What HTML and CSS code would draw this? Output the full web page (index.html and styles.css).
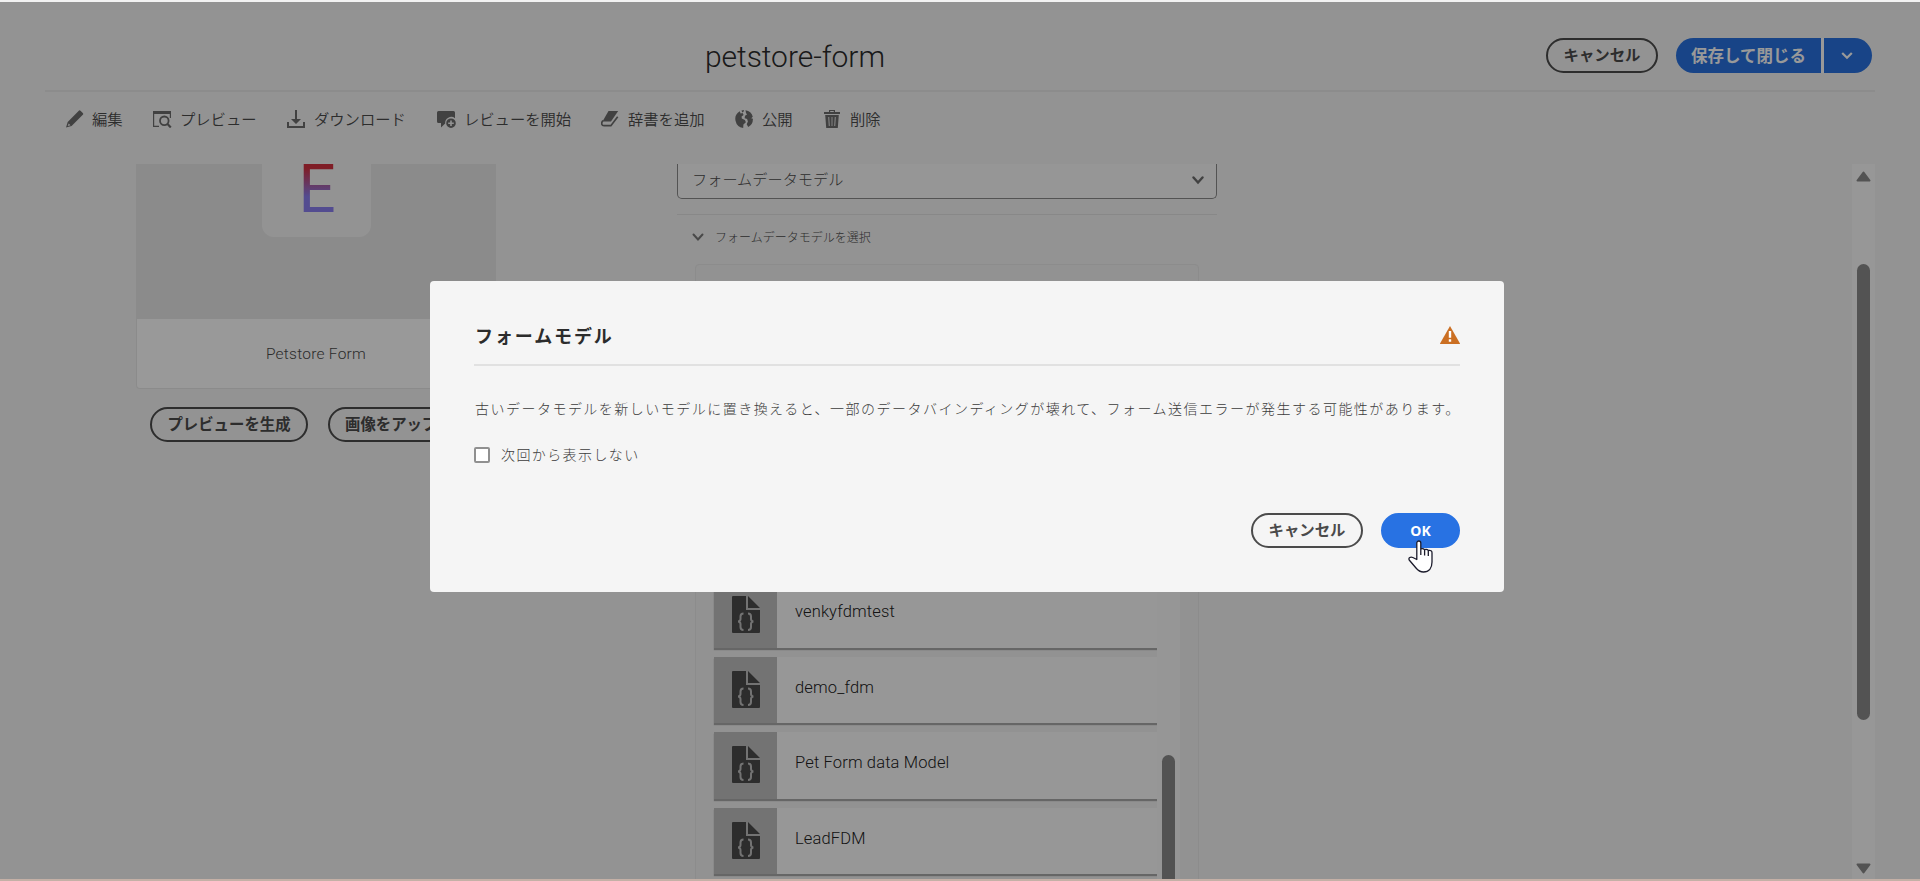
FILE: index.html
```html
<!DOCTYPE html>
<html lang="ja">
<head>
<meta charset="utf-8">
<title>petstore-form</title>
<link rel="stylesheet" href="styles.css">
</head>
<body>
<div class="page">
  <header class="header">
    <h1 class="title">petstore-form</h1>
    <div class="header-actions">
      <button class="btn">キャンセル</button>
      <div class="split">
        <button class="split-main">保存して閉じる</button>
        <button class="split-menu"><svg width="12" height="8" viewBox="0 0 12 8"><path d="M1.200 1 6 5.800 10.800 1" fill="none" stroke="#fff" stroke-width="2.200"/></svg></button>
      </div>
    </div>
  </header>
  <nav class="toolbar">
    <a class="tool t1"><svg width="18" height="18" viewBox="0 0 18 18"><path d="M12.800.8a1.200 1.200 0 0 1 1.700 0l2.300 2.300a1.200 1.200 0 0 1 0 1.700L5.600 15.900 0 17.400 1.700 12zM2.700 13.400l-1 2.700 2.800-.9z" fill-rule="evenodd"/></svg>編集</a>
    <a class="tool t2"><svg width="19" height="18" viewBox="0 0 19 18"><path d="M0 1h18v7h-1.200V4H1.200v11.800H6V17H0z"/><circle cx="11.300" cy="10.800" r="4.300" fill="none" stroke="#6d6d6d" stroke-width="1.800"/><path d="m14.300 13.800 3.500 3.600" stroke="#6d6d6d" stroke-width="2.200"/></svg>プレビュー</a>
    <a class="tool t3"><svg width="18" height="18" viewBox="0 0 18 18"><path d="M8 0h2v9h4l-5 5-5-5h4zM0 12h2v4h14v-4h2v6H0z"/></svg>ダウンロード</a>
    <a class="tool t4"><svg width="19" height="18" viewBox="0 0 19 18"><path d="M1.500 1h15A1.500 1.500 0 0 1 18 2.500v5.800a6 6 0 0 0-9.800 5.300L4 17.500V13H1.500A1.500 1.500 0 0 1 0 11.500v-9A1.500 1.500 0 0 1 1.500 1z"/><path d="M14 8.400a4.800 4.800 0 1 0 0 9.600 4.800 4.800 0 0 0 0-9.600zm.8 2v2h2V14h-2v2h-1.600v-2h-2v-1.600h2v-2z" fill-rule="evenodd"/></svg>レビューを開始</a>
    <a class="tool t5"><svg width="18" height="18" viewBox="0 0 18 18"><path d="M7.500 1h9.700L10 11.500H1.500z"/><path d="M1.900 10.500C0 13 .4 15.700 3 15.700h6.900l6.800-9" fill="none" stroke="#6d6d6d" stroke-width="1.700"/></svg>辞書を追加</a>
    <a class="tool t6"><svg width="18" height="18" viewBox="0 0 18 18"><path d="M4.800 1.200 5.600 3.500 7.600 3l1 2-2 1.500.2 2 3.100 1.500 1 2.200-2.500 2.400-.2 3.300A9 9 0 0 1 4.800 1.200zM6.500.5 9 0l-.5 1.800-1.200.6zM10.500.2a9 9 0 0 1 7.300 6.600l-1.600 1.400 1.700.6a9 9 0 0 1-4.700 8.200l-1.500-2.700 1.200-2.800-.8-2.500-2.500-.7.400-2.600 2-1.200-1-1.500z"/></svg>公開</a>
    <a class="tool t7"><svg width="16" height="18" viewBox="0 0 16 18"><path d="M5 0h6v2h5v2H0V2h5zm1.200 1v1h3.600V1zM1.200 5h13.600l-1 13H2.200zM4.300 7l.5 9h.9L5.200 7zm3.300 0v9h.8V7zm3.200 0-.5 9h.9l.5-9z" fill-rule="evenodd"/></svg>削除</a>
  </nav>
  <main class="content">
    <section class="left">
      <div class="card">
        <div class="thumb"><div class="tile"><span class="letter">E</span></div></div>
        <div class="card-name">Petstore Form</div>
      </div>
      <div class="card-actions"><button class="btn">プレビューを生成</button><button class="btn">画像をアップロード</button></div>
    </section>
    <section class="model">
      <div class="select"><span>フォームデータモデル</span><svg width="12" height="9" viewBox="0 0 12 9"><path d="m1.500 1.500 4.500 5 4.500-5" fill="none" stroke="#6d6d6d" stroke-width="2.400" stroke-linecap="round"/></svg></div>
      <div class="accordion"><svg width="12" height="9" viewBox="0 0 12 9"><path d="m1.500 1.500 4.500 5 4.500-5" fill="none" stroke="#7a7a7a" stroke-width="2" stroke-linecap="round"/></svg><span>フォームデータモデルを選択</span></div>
      <div class="panel">
        <div class="list">
          <div class="row"><div class="icon"><svg width="28" height="37" viewBox="0 0 28 37"><use href="#doc"/></svg></div><span>venkyfdmtest</span></div>
          <div class="row"><div class="icon"><svg width="28" height="37" viewBox="0 0 28 37"><use href="#doc"/></svg></div><span>demo_fdm</span></div>
          <div class="row"><div class="icon"><svg width="28" height="37" viewBox="0 0 28 37"><use href="#doc"/></svg></div><span>Pet Form data Model</span></div>
          <div class="row"><div class="icon"><svg width="28" height="37" viewBox="0 0 28 37"><use href="#doc"/></svg></div><span>LeadFDM</span></div>
        </div>
        <div class="list-track"><div class="list-thumb"></div></div>
      </div>
    </section>
    <div class="track">
      <svg width="15" height="11" viewBox="0 0 15 11"><path d="M7.500 1.500 13.500 9.500h-12z" fill="#8a8a8a" stroke="#8a8a8a" stroke-width="2" stroke-linejoin="round"/></svg>
      <div class="track-thumb"></div>
      <svg class="down" width="15" height="11" viewBox="0 0 15 11"><path d="M7.500 9.500 13.500 1.500h-12z" fill="#8a8a8a" stroke="#8a8a8a" stroke-width="2" stroke-linejoin="round"/></svg>
    </div>
  </main>
</div>
<svg class="defs" width="0" height="0"><defs><g id="doc"><path d="M1 0h13v14h14v22a1 1 0 0 1-1 1H1a1 1 0 0 1-1-1V1a1 1 0 0 1 1-1zM16 0l12 12H16z" fill="#4b4b4b"/><path d="M11.500 17.500c-2.500 0-3 1-3 3v2.500c0 1.500-.8 2.200-2.300 2.500 1.500.3 2.300 1 2.300 2.500v3c0 2 .5 3 3 3M16 17.500c2.500 0 3 1 3 3v2.500c0 1.500.8 2.200 2.300 2.500-1.500.3-2.300 1-2.300 2.500v3c0 2-.5 3-3 3" fill="none" stroke="#c0c0c0" stroke-width="2"/></g></defs></svg>
<div class="underlay"></div>
<div class="dialog">
  <div class="dialog-head"><h2>フォームモデル</h2><svg width="20" height="18" viewBox="0 0 20 18"><path d="M10 0 20 17.500q0 .5-.5.500H.5q-.5 0-.5-.5z" fill="#cb6f22"/><path d="M8.800 5h2.400v6.700H8.800zM8.800 13.300h2.400v2.400H8.800z" fill="#fff"/></svg></div>
  <p class="message">古いデータモデルを新しいモデルに置き換えると、一部のデータバインディングが壊れて、フォーム送信エラーが発生する可能性があります。</p>
  <label class="check"><span class="box"></span><span class="check-label">次回から表示しない</span></label>
  <div class="dialog-foot"><button class="btn">キャンセル</button><button class="btn ok">OK</button></div>
</div>
<svg class="cursor" width="26" height="33" viewBox="0 0 26 33"><path d="M8.800 19.500V3a2 2 0 0 1 4 0V9q2.200-1 3.800.7 2.200-1 3.700.7 3.700-.5 3.700 2.400v9.200c0 6-3 10-8.500 10-3 0-5.500-1.500-7.500-4L1.200 20c-1-2.300 1.300-3.400 3.600-2.500zM12.800 9v6M16.600 9.700V15.500M20.300 10.500V16" fill="#fff" stroke="#1b1b2b" stroke-width="1.300" stroke-linejoin="round"/></svg>
</body>
</html>
```
FILE: styles.css
```css
* { box-sizing: border-box; }
body { margin: 0; height: 881px; overflow: hidden; background: #f5f5f5; color: #4b4b4b; font-family: "Noto Sans CJK JP", sans-serif; }
h1, h2, p { margin: 0; }
button { font: inherit; border: 0; padding: 0; }
svg { flex: none; }
.page { height: 881px; padding: 2px 45px 0; display: flex; flex-direction: column; }
.header { height: 90px; flex: none; border-bottom: 2px solid #e9e9e9; display: flex; padding: 36px 3px 0 660px; justify-content: space-between; }
.title { font: 300 30px/38px Roboto, sans-serif; letter-spacing: -.05px; color: #2c2c2c; }
.header-actions { display: flex; gap: 18px; }
.btn { height: 35px; padding: 0 15px 2px; border: 2px solid #4b4b4b; border-radius: 18px; background: transparent; color: #4b4b4b; font-size: 15.400px; font-weight: 700; line-height: 29px; white-space: nowrap; }
.header .btn { width: 112px; padding: 0 0 2px; }
.split { display: flex; gap: 3px; background: #fff; height: 35px; border-radius: 18px; }
.split button { background: #2872e1; color: #fff; font-size: 16.500px; font-weight: 700; line-height: 32px; }
.split .split-main { width: 145px; border-radius: 18px 0 0 18px; padding-bottom: 2px; }
.split .split-menu { width: 48px; border-radius: 0 18px 18px 0; display: flex; align-items: center; justify-content: center; padding-right: 2px; }
.toolbar { display: flex; height: 72px; flex: none; padding: 18px 0 0 21px; }
.tool { display: flex; height: 20px; font-size: 15.300px; font-weight: 350; line-height: 17px; white-space: nowrap; }
.tool svg { fill: #6d6d6d; }
.t1 { width: 87px; gap: 8px; } .t2 { width: 134px; gap: 8px; } .t3 { width: 150px; gap: 9px; } .t4 { width: 164px; gap: 8px; }
.t5 { width: 134px; gap: 9px; } .t6 { width: 89px; gap: 9px; } .t7 { gap: 10px; }
.content { height: 715px; flex: none; display: flex; overflow: hidden; }
.left { width: 632px; flex: none; padding-left: 91px; }
.card { width: 360px; height: 225px; background: #fff; border: 1px solid #e8e8e8; border-top: 0; border-radius: 0 0 4px 4px; }
.thumb { height: 155px; background: #e8e8e8; display: flex; justify-content: center; }
.tile { width: 109px; height: 73px; background: #f6f6f6; border-radius: 0 0 12px 12px; display: flex; justify-content: center; padding-left: 2px; }
.letter { font: 400 66px/51px Roboto, sans-serif; height: 51px; background: linear-gradient(#d43140 8%, #8a7ff0 64%); -webkit-background-clip: text; background-clip: text; color: transparent; }
.card-name { text-align: center; font: 300 15.500px/71px Roboto, sans-serif; letter-spacing: .25px; }
.card-actions { display: flex; gap: 20px; padding: 18px 0 0 14px; }
.card-actions .btn:first-child { width: 158px; padding: 0 0 2px; }
.model { width: 540px; flex: none; }
.select { height: 35px; border: 1px solid #8a8a8a; border-top: 0; border-radius: 0 0 5px 5px; background: #fafafa; display: flex; justify-content: space-between; align-items: center; padding: 0 12px 2px 14px; font-size: 15.200px; font-weight: 300; }
.select span { padding-bottom: 5px; }
.accordion { margin-top: 15px; height: 50px; border-top: 1px solid #e3e3e3; display: flex; align-items: center; gap: 11px; padding: 0 0 5px 15px; font-size: 12px; font-weight: 300; }
.accordion span { padding-bottom: 2px; }
.panel { margin-left: 18px; width: 504px; height: 640px; border: 1px solid #e9e9e9; border-radius: 4px; background: #f3f3f3; padding: 316.500px 18px 0; display: flex; }
.list { width: 443px; }
.row { height: 66.500px; margin-top: 9px; background: #fcfcfc; box-shadow: 0 2px 1px #aaa; display: flex; font: 300 16.500px/62px Roboto, sans-serif; color: #222; letter-spacing: .15px; gap: 18px; }
.row:first-child { margin-top: -5px; height: 71px; }
.row:first-child .icon { padding-top: 4px; }
.row:first-child span { line-height: 70px; }
.icon { width: 63px; background: #c0c0c0; display: flex; justify-content: center; align-items: center; padding-left: 1px; }
.row:not(:first-child) .icon { padding-bottom: 1px; }
.list-track { width: 23px; height: 400px; background: #fafafa; padding: 173px 5px 0; }
.list-thumb { height: 240px; border-radius: 7px; background: #8a8a8a; width: 13px; }
.track { margin-left: auto; width: 23px; background: #fcfcfc; display: flex; flex-direction: column; align-items: center; padding: 7px 0 5px; }
.track-thumb { width: 13px; height: 456px; margin-top: 82px; border-radius: 7px; background: #8a8a8a; }
.down { margin-top: auto; }
.defs { position: absolute; }
.underlay { position: absolute; inset: 0; background: rgba(0,0,0,.4); background-clip: padding-box; border-top: 2px solid #f2f2f2; border-bottom: 2px solid #c4b0a6; }
.dialog { position: absolute; left: 430px; top: 281px; width: 1074px; height: 311px; border-radius: 4px; background: #f5f5f5; padding: 35px 44px 44px; display: flex; flex-direction: column; }
.dialog-head { height: 50px; border-bottom: 2px solid #e1e1e1; display: flex; justify-content: space-between; align-items: center; padding-bottom: 10px; flex: none; }
h2 { font-size: 18px; font-weight: 700; letter-spacing: 1.900px; color: #2c2c2c; padding-left: 1px; }
.message { margin-top: 30px; font-size: 14px; line-height: 24px; letter-spacing: 1.480px; font-weight: 300; white-space: nowrap; color: #3c3c3c; padding-left: 1px; }
.check { display: flex; align-items: center; gap: 11px; margin-top: 23px; height: 24px; font-size: 14px; font-weight: 300; letter-spacing: 1.400px; color: #3c3c3c; }
.check-label { padding-bottom: 3px; }
.box { width: 16px; height: 16px; border: 2px solid #909090; border-radius: 2px; background: #fff; }
.dialog-foot { margin-top: auto; display: flex; justify-content: flex-end; gap: 18px; }
.dialog .btn { width: 112px; padding: 0 0 2px; }
.dialog .btn.ok { width: 79px; background: #2872e3; border-color: #2872e3; color: #fff; font: 700 14px/30px "Open Sans", sans-serif; padding: 0; }
.cursor { position: absolute; left: 1408px; top: 540px; }
```
